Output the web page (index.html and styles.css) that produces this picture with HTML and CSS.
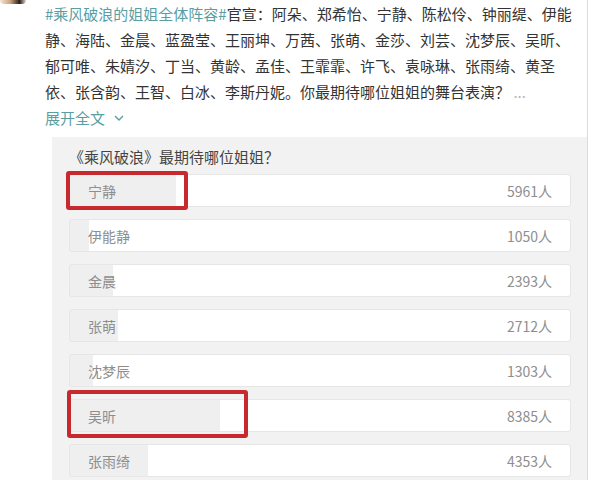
FILE: index.html
```html
<!DOCTYPE html>
<html lang="zh-CN">
<head>
    <meta charset="UTF-8">
    <title>乘风破浪的姐姐</title>
    <link rel="stylesheet" href="styles.css">
</head>
<body>
    <div class="card">
        <div class="side">
            <div class="avatar"></div>
        </div>
        <div class="main">
            <p class="post">
                <a class="topic" href="#">#乘风破浪的姐姐全体阵容#</a>官宣：阿朵、郑希怡、宁静、陈松伶、钟丽缇、伊能静、海陆、金晨、蓝盈莹、王丽坤、万茜、张萌、金莎、刘芸、沈梦辰、吴昕、郁可唯、朱婧汐、丁当、黄龄、孟佳、王霏霏、许飞、袁咏琳、张雨绮、黄圣依、张含韵、王智、白冰、李斯丹妮。你最期待哪位姐姐的舞台表演？ <span class="more">...</span>
            </p>
            <a class="expand" href="#">展开全文
                <svg width="10" height="7" viewBox="0 0 10 7"><path d="M1 1l4 4 4-4" fill="none" stroke="currentColor" stroke-width="1.4"/></svg>
            </a>

            <div class="poll">
                <h3 class="poll-title">《乘风破浪》最期待哪位姐姐？</h3>
                <ul class="options">
                    <li class="option" style="--pct: 21.3%">
                        <span class="name">宁静</span><span class="count">5961人</span>
                        <i class="mark mark-one"></i>
                    </li>
                    <li class="option" style="--pct: 3.8%">
                        <span class="name">伊能静</span><span class="count">1050人</span>
                    </li>
                    <li class="option" style="--pct: 8.6%">
                        <span class="name">金晨</span><span class="count">2393人</span>
                    </li>
                    <li class="option" style="--pct: 9.7%">
                        <span class="name">张萌</span><span class="count">2712人</span>
                    </li>
                    <li class="option" style="--pct: 4.7%">
                        <span class="name">沈梦辰</span><span class="count">1303人</span>
                    </li>
                    <li class="option" style="--pct: 30%">
                        <span class="name">吴昕</span><span class="count">8385人</span>
                        <i class="mark mark-two"></i>
                    </li>
                    <li class="option" style="--pct: 15.6%">
                        <span class="name">张雨绮</span><span class="count">4353人</span>
                    </li>
                </ul>
            </div>
        </div>
    </div>
</body>
</html>
```

FILE: styles.css
```css
body {
    margin: 0;
    background: #fff;
    font-family: "Noto Sans CJK SC", "Noto Sans", sans-serif;
    color: #333;
}
.card {
    display: flex;
    width: 587px;
    height: 480px;
    overflow: hidden;
    border-right: 1px solid #dcdcdc;
}
.side {
    width: 45px;
    flex-shrink: 0;
}
.avatar {
    width: 26px;
    height: 4px;
    border-radius: 0 0 14px 14px;
    background: linear-gradient(to right, #f3e6d6, #c9a27a 40%, #2b2018 75%, #e8d9c8);
}
.main {
    flex: 1;
}
.post {
    margin: 1px 0 0;
    width: 530px;
    font-size: 15px;
    line-height: 26px;
}
.topic, .expand {
    color: #5a9ea2;
    text-decoration: none;
}
.more {
    color: #b5b5b5;
}
.expand {
    display: inline-flex;
    align-items: center;
    gap: 9px;
    font-size: 15px;
    line-height: 26px;
}
.poll {
    margin: 6px 0 0 7px;
    padding: 9px 16px 20px 17px;
    background: #f2f2f2;
}
.poll-title {
    margin: 0 0 6px;
    font-size: 15px;
    font-weight: normal;
    line-height: 22px;
    color: #444;
}
.options {
    list-style: none;
    margin: 0;
    padding: 0;
    display: flex;
    flex-direction: column;
    gap: 12px;
}
.option {
    position: relative;
    display: flex;
    justify-content: space-between;
    align-items: center;
    height: 33px;
    padding: 0 18px;
    border: 1px solid #e6e6e6;
    border-radius: 3px;
    box-sizing: border-box;
    background: linear-gradient(to right, #efefef var(--pct), #fff var(--pct));
    font-size: 14px;
    color: #8e8e8e;
}
.mark {
    position: absolute;
    border: 4px solid #c62a2f;
    border-radius: 3px;
}
.mark-one {
    left: -4px;
    top: -4px;
    width: 114px;
    height: 31px;
}
.mark-two {
    left: -3px;
    top: -10px;
    width: 173px;
    height: 40px;
}
```
